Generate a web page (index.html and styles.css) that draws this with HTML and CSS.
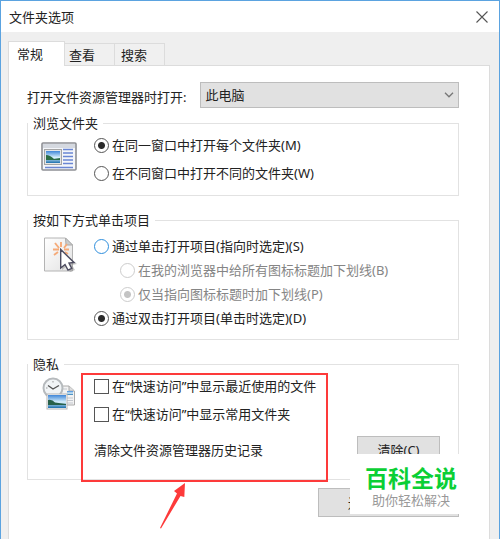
FILE: index.html
```html
<!DOCTYPE html>
<html lang="zh-CN">
<head>
<meta charset="utf-8">
<title>文件夹选项</title>
<link rel="stylesheet" href="styles.css">
</head>
<body>

<div class="dialog">
  <div class="titlebar">
    <span>文件夹选项</span>
    <button type="button" class="close" aria-label="关闭">
      <svg width="12" height="12" viewBox="0 0 12 12"><path d="M.5.5l11 11M11.5.5l-11 11" stroke="#555" stroke-width="1.1" fill="none"/></svg>
    </button>
  </div>

  <div class="tabs">
    <button type="button" class="tab active">常规</button>
    <button type="button" class="tab">查看</button>
    <button type="button" class="tab">搜索</button>
  </div>

  <form class="panel">
    <div class="open-row">
      <label for="openTo">打开文件资源管理器时打开:</label>
      <div class="select-wrap">
        <select id="openTo">
          <option>此电脑</option>
          <option>快速访问</option>
        </select>
        <svg class="chevron" width="10" height="6" viewBox="0 0 10 6"><path d="M1 .8l4 4 4-4" stroke="#777" stroke-width="1.3" fill="none"/></svg>
      </div>
    </div>

    <fieldset class="group browse">
      <legend>浏览文件夹</legend>
      <div class="group-body">
        <svg class="icon" width="36" height="36" viewBox="0 0 36 36">
          <defs>
            <linearGradient id="sky" x1="0" y1="0" x2="0" y2="1">
              <stop offset="0" stop-color="#3f86d8"/>
              <stop offset=".55" stop-color="#d9f1fb"/>
              <stop offset="1" stop-color="#1b6fae"/>
            </linearGradient>
            <linearGradient id="paper" x1="0" y1="0" x2="1" y2="1">
              <stop offset="0" stop-color="#ffffff"/>
              <stop offset="1" stop-color="#e2e2e2"/>
            </linearGradient>
          </defs>
          <rect x="1" y="1" width="34" height="27" rx="1" fill="#f4f6fa" stroke="#8e9095" stroke-width="1.6"/>
          <rect x="2" y="2" width="32" height="4" fill="#d5d9e0"/>
          <rect x="3.5" y="7.500" width="17" height="15" fill="#e6e6e6" stroke="#a5a5a5"/>
          <rect x="5" y="9" width="14" height="12" fill="url(#sky)"/>
          <path d="M5 13q4 0 8 4l6-1v2H5z" fill="#2c6d45"/>
          <path d="M22 7.500h10M22 11h10M22 14.500h10M22 18h10M22 21.500h10M4 25.500h28" stroke="#6a86d4" stroke-width="1.300"/>
        </svg>
        <div class="options">
          <label><input type="radio" name="browse" checked>在同一窗口中打开每个文件夹(M)</label>
          <label><input type="radio" name="browse">在不同窗口中打开不同的文件夹(W)</label>
        </div>
      </div>
    </fieldset>

    <fieldset class="group click">
      <legend>按如下方式单击项目</legend>
      <div class="group-body">
        <svg class="icon" width="36" height="36" viewBox="0 0 36 36">
          <path d="M3.500 1h21l7 7v26h-28z" fill="url(#paper)" stroke="#b4b4b4"/>
          <path d="M24.500 1l.5 7h6.500z" fill="#c9cccc" stroke="#aaa"/>
          <path d="M20 5v5M14 6l4 5M26 7l-3 4M12 12.500h6M23 12.500h5M17 15l-4 3M24 15l3 2" stroke="#f5aa78" stroke-width="1.900"/>
          <path d="M21 14v19l5-4 3 6 5-2-3-5 5-1z" fill="#888" opacity=".45"/>
          <path d="M19.700 12.500v18.500l4.300-3.500 3 5.700 3.700-1.700-2.700-5.500 5-.5z" fill="#fff" stroke="#4d4c60" stroke-width="1.400"/>
        </svg>
        <div class="options">
          <label><input type="radio" name="click" class="hot">通过单击打开项目(指向时选定)(S)</label>
          <label class="sub"><input type="radio" name="underline" disabled>在我的浏览器中给所有图标标题加下划线(B)</label>
          <label class="sub"><input type="radio" name="underline" checked disabled>仅当指向图标标题时加下划线(P)</label>
          <label><input type="radio" name="click" checked>通过双击打开项目(单击时选定)(D)</label>
        </div>
      </div>
    </fieldset>

    <fieldset class="group privacy">
      <legend>隐私</legend>
      <div class="group-body">
        <svg class="icon" width="36" height="36" viewBox="0 0 36 36">
          <path d="M18 9h10l5.500 5v14H18z" fill="#f3f3f3" stroke="#aaa"/>
          <path d="M28 9v5h5" fill="#ddd" stroke="#aaa"/>
          <path d="M21 12h5M26 21h6M26 23.500h6M26 26h6" stroke="#c3c7ce"/>
          <rect x="26" y="14" width="6" height="4" fill="url(#sky)"/>
          <circle cx="12" cy="11" r="9.500" fill="#f1f4f6" stroke="#b6babd" stroke-width="2"/>
          <path d="M7 8.500l5 3.500 6-3.500" stroke="#555" stroke-width="1.400" fill="none"/>
          <path d="M12 4v1.500M5 11h1.500" stroke="#999"/>
          <rect x="6" y="17" width="20" height="15" fill="#fff" stroke="#b5b5b5"/>
          <rect x="7" y="18" width="18" height="13" fill="url(#sky)"/>
          <path d="M7 23q4-1 7 2.500l11 1.500v1H7z" fill="#28614a"/>
        </svg>
        <div class="options">
          <label><input type="checkbox">在“快速访问”中显示最近使用的文件</label>
          <label><input type="checkbox">在“快速访问”中显示常用文件夹</label>
          <div class="clear-row">
            <span>清除文件资源管理器历史记录</span>
            <button type="button" class="btn">清除(C)</button>
          </div>
        </div>
        <div class="highlight"></div>
        <svg class="arrow" width="26" height="46" viewBox="0 0 26 46"><path d="M25 0L14 8l3 2.500L0 45l1 .5L20.500 13l3.800 1z" fill="#fd3a3a"/></svg>
      </div>
    </fieldset>

    <div class="footer">
      <button type="button" class="btn restore">还原默认值(R)</button>
      <div class="watermark">
        <strong>百科全说</strong>
        <span>助你轻松解决</span>
      </div>
    </div>
  </form>
</div>

</body>
</html>
```
FILE: styles.css
```css
* {
  box-sizing: border-box;
}

body {
  margin: 0;
  font-family: "Noto Sans", "Noto Sans CJK SC", sans-serif;
  font-size: 13px;
  line-height: 18px;
  color: #222;
}

button,
select {
  font: inherit;
  color: inherit;
}

.dialog {
  display: flex;
  flex-direction: column;
  min-height: 100vh;
  border: 1px solid #5ba3e0;
  border-bottom: none;
  background-color: #efefef;
}

.titlebar {
  display: flex;
  justify-content: space-between;
  align-items: center;
  height: 31px;
  padding: 0 11px 0 8px;
  background-color: #fff;
}

.close {
  display: flex;
  padding: 0;
  border: none;
  background: none;
}

.tabs {
  display: flex;
  align-items: flex-end;
  margin-top: 9px;
  padding-left: 7px;
}

.tab {
  height: 22px;
  width: 50px;
  padding: 0 0 0 6px;
  text-align: left;
  border: 1px solid #dcdcdc;
  border-left: none;
  border-bottom: none;
  background-color: #f0f0f0;
}

.tab + .tab {
  padding-left: 4px;
}

.tab + .tab + .tab {
  padding-left: 6px;
}

.tab.active {
  height: 25px;
  width: 57px;
  margin-bottom: -1px;
  padding-left: 8px;
  border-left: 1px solid #dcdcdc;
  background-color: #fff;
  z-index: 1;
}

.panel {
  flex: 1;
  margin: 0 9px 0 7px;
  padding: 16px 30px 0 18px;
  border: 1px solid #dcdcdc;
  border-bottom: none;
  background-color: #fff;
}

.open-row {
  display: flex;
  align-items: center;
  gap: 14px;
  margin-bottom: 6px;
}

.open-row label {
  padding-top: 4px;
  white-space: nowrap;
}

.select-wrap {
  position: relative;
  flex: 1;
}

select {
  display: block;
  width: 100%;
  height: 26px;
  padding: 0 4px;
  border: 1px solid #bdbdbd;
  border-radius: 0;
  background-color: #e1e1e1;
  appearance: none;
}

.chevron {
  position: absolute;
  right: 5px;
  top: 10px;
  pointer-events: none;
}

.group {
  min-width: 0;
  margin: 0 0 15px;
  padding: 0;
  border: 1px solid #e2e2e2;
}

legend {
  padding: 0 5px;
}

.group-body {
  position: relative;
  display: flex;
  gap: 17px;
  padding: 4px 18px 13px 13px;
}

.icon {
  flex: none;
}

.options {
  flex: 1;
  display: flex;
  flex-direction: column;
  gap: 10px;
}

.options label {
  display: flex;
  align-items: center;
  gap: 3px;
  white-space: nowrap;
}

.browse .icon {
  margin-top: 6px;
  margin-bottom: -6px;
}

.click .group-body {
  padding-top: 8px;
  padding-bottom: 12px;
}

.click .options {
  gap: 6px;
}

.options .sub {
  margin-left: 26px;
  color: #858585;
}

.privacy {
  margin-bottom: 8px;
}

.privacy .group-body {
  padding-bottom: 15px;
}

input {
  appearance: none;
  width: 15px;
  height: 15px;
  margin: 0;
  border: 1px solid #555;
  background-color: #fff;
}

input[type="radio"] {
  border-radius: 50%;
}

input[type="radio"]:checked {
  background-image: radial-gradient(circle, #2b2b2b 3px, transparent 4px);
}

input[type="radio"]:disabled {
  border-color: #ccc;
}

input[type="radio"]:checked:disabled {
  background-image: radial-gradient(circle, #c4c4c4 3px, transparent 4px);
}

input.hot {
  border-color: #2f8fdd;
}

.clear-row {
  display: flex;
  justify-content: space-between;
  align-items: center;
  margin-top: 3px;
}

.btn {
  height: 28px;
  width: 83px;
  padding: 0;
  border: 1px solid #bdbdbd;
  background-color: #e1e1e1;
}

/* red marker drawn over the privacy options */
.highlight {
  position: absolute;
  left: 53px;
  top: 0;
  width: 247px;
  height: 109px;
  border: 2px solid #fd3a3a;
}

.arrow {
  position: absolute;
  left: 132px;
  top: 110px;
}

.footer {
  position: relative;
  display: flex;
  justify-content: flex-end;
}

.restore {
  width: 141px;
  height: 29px;
}

.watermark {
  position: absolute;
  right: 0;
  bottom: 3px;
  width: 109px;
  height: 60px;
  padding: 11px 0 0 13px;
  display: flex;
  flex-direction: column;
  align-items: center;
  background-color: #fff;
  white-space: nowrap;
}

.watermark strong {
  font-size: 23px;
  line-height: 26px;
  color: #0bcf35;
}

.watermark span {
  color: #999;
}
```
